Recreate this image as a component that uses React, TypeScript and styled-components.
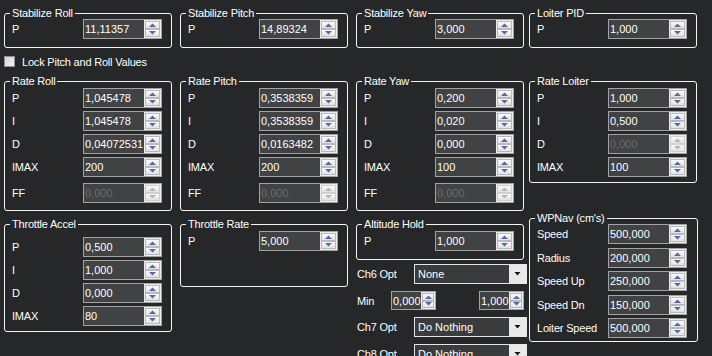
import React from "react";
import styled, { createGlobalStyle } from "styled-components";

const BG = "#262728";
const CTRL = "#414243";

const GlobalStyle = createGlobalStyle`
  * { box-sizing: border-box; }
  html, body { margin: 0; padding: 0; background: ${BG}; }
  body {
    width: 712px;
    height: 356px;
    overflow: hidden;
    font-family: "Liberation Sans", Arial, sans-serif;
    font-size: 11px;
    color: #ffffff;
  }
`;

const Page = styled.div`
  display: flex;
  flex-direction: column;
  padding: 7px 0 0 4px;
`;

const Band = styled.div<{ $mt?: number }>`
  display: grid;
  grid-template-columns: 176px 176px 173px 169px;
  align-items: start;
  margin-top: ${(p) => p.$mt ?? 0}px;
`;

const Group = styled.fieldset<{ $pb?: number; $mt?: number; $w?: number }>`
  margin: ${(p) => p.$mt ?? 0}px 0 0 0;
  padding: 0 0 ${(p) => p.$pb ?? 7}px 0;
  width: ${(p) => p.$w ?? 168}px;
  min-width: 0;
  border: 1px solid #f4f4f4;
  border-radius: 3px;
`;

const Title = styled.legend`
  margin-left: 5px;
  padding: 0 2px;
  height: 12px;
  line-height: 12px;
  font-size: 11px;
  letter-spacing: -0.2px;
  color: #ffffff;
`;

const Rows = styled.div<{ $gap?: number; $pt?: number }>`
  display: flex;
  flex-direction: column;
  gap: ${(p) => p.$gap ?? 3}px;
  padding-top: ${(p) => p.$pt ?? 0}px;
`;

const Row = styled.div<{ $mt?: number }>`
  display: flex;
  align-items: center;
  height: 20px;
  padding-left: 7px;
  margin-top: ${(p) => p.$mt ?? 0}px;
`;

const Label = styled.span<{ $w?: number }>`
  width: ${(p) => p.$w ?? 71}px;
  flex: none;
  letter-spacing: -0.2px;
  white-space: nowrap;
`;

const SpinFrame = styled.div<{ $w: number; $h: number }>`
  display: flex;
  width: ${(p) => p.$w}px;
  height: ${(p) => p.$h}px;
  border: 1px solid #a3a3a3;
  background: ${CTRL};
  flex: none;
`;

const SpinValue = styled.span<{ $disabled?: boolean }>`
  flex: 1;
  min-width: 0;
  overflow: hidden;
  white-space: nowrap;
  padding-left: 1px;
  font-size: 11px;
  display: flex;
  align-items: center;
  color: ${(p) => (p.$disabled ? "#6c6d6e" : "#ffffff")};
`;

const SpinCol = styled.div<{ $w: number }>`
  width: ${(p) => p.$w}px;
  flex: none;
  display: flex;
  flex-direction: column;
  padding: 1px;
  background: #ececec;
`;

const SpinBtn = styled.div<{ $disabled?: boolean }>`
  flex: 1;
  display: flex;
  align-items: center;
  justify-content: center;
  border: 1px solid ${(p) => (p.$disabled ? "#d0d0d0" : "#b9b9b9")};
  background: linear-gradient(#fbfbfb, #e2e2e2);
`;

const Check = styled.label`
  display: flex;
  align-items: center;
  gap: 7px;
  height: 13px;
  margin-top: 7px;
  letter-spacing: -0.2px;
  grid-column: 1 / span 2;
`;

const CheckBox = styled.span`
  width: 11px;
  height: 11px;
  border: 1px solid #8f9091;
  background: linear-gradient(135deg, #d3d3d3, #f4f4f4);
`;

const Stack = styled.div`
  display: flex;
  flex-direction: column;
  margin-top: 6px;
`;

const OptRow = styled.div<{ $mt: number }>`
  display: flex;
  align-items: center;
  padding-left: 1px;
  margin-top: ${(p) => p.$mt}px;
`;

const MinRow = styled.div`
  display: grid;
  grid-template-columns: 34px 45px 43px 45px;
  align-items: center;
  padding-left: 1px;
  margin-top: 7px;
`;

const Combo = styled.div`
  display: flex;
  width: 113px;
  height: 20px;
  border: 1px solid #e6e6e6;
  background: #3a3b3c;
  flex: none;
`;

const ComboText = styled.span`
  flex: 1;
  padding-left: 3px;
  display: flex;
  align-items: center;
  white-space: nowrap;
  overflow: hidden;
`;

const ComboBtn = styled.span`
  width: 17px;
  display: flex;
  align-items: center;
  justify-content: center;
  background: #e9e9e9;
`;

function Arrow({ up, disabled }: { up?: boolean; disabled?: boolean }) {
  const c = disabled ? "#b4b4b4" : "#5469a8";
  return (
    <svg width="7" height="4" viewBox="0 0 7 4">
      {up ? <path d="M0 4 L3.5 0.5 L7 4 Z" fill={c} /> : <path d="M0 0 L3.5 3.5 L7 0 Z" fill={c} />}
    </svg>
  );
}

function NumBox({
  value,
  disabled,
  w = 79,
  h = 20,
  sw = 17,
}: {
  value: string;
  disabled?: boolean;
  w?: number;
  h?: number;
  sw?: number;
}) {
  return (
    <SpinFrame $w={w} $h={h}>
      <SpinValue $disabled={disabled}>{value}</SpinValue>
      <SpinCol $w={sw}>
        <SpinBtn $disabled={disabled}>
          <Arrow up disabled={disabled} />
        </SpinBtn>
        <SpinBtn $disabled={disabled}>
          <Arrow disabled={disabled} />
        </SpinBtn>
      </SpinCol>
    </SpinFrame>
  );
}

function Select({ value }: { value: string }) {
  return (
    <Combo>
      <ComboText>{value}</ComboText>
      <ComboBtn>
        <svg width="7" height="4" viewBox="0 0 7 4">
          <path d="M0.5 0 L3.5 3.5 L6.5 0 Z" fill="#111" />
        </svg>
      </ComboBtn>
    </Combo>
  );
}

type Field = { label: string; value: string; disabled?: boolean; mt?: number };

function PidGroup({
  title,
  fields,
  pb,
  mt,
  pt,
  gap,
  w,
}: {
  title: string;
  fields: Field[];
  pb?: number;
  mt?: number;
  pt?: number;
  gap?: number;
  w?: number;
}) {
  return (
    <Group $pb={pb} $mt={mt} $w={w}>
      <Title>{title}</Title>
      <Rows $pt={pt} $gap={gap}>
        {fields.map((f) => (
          <Row key={f.label} $mt={f.mt}>
            <Label>{f.label}</Label>
            <NumBox value={f.value} disabled={f.disabled} />
          </Row>
        ))}
      </Rows>
    </Group>
  );
}

export default function App() {
  return (
    <>
      <GlobalStyle />
      <Page>
        <Band>
          <PidGroup title="Stabilize Roll" pb={8} fields={[{ label: "P", value: "11,11357" }]} />
          <PidGroup title="Stabilize Pitch" pb={8} fields={[{ label: "P", value: "14,89324" }]} />
          <PidGroup title="Stabilize Yaw" pb={8} fields={[{ label: "P", value: "3,000" }]} />
          <PidGroup title="Loiter PID" pb={8} fields={[{ label: "P", value: "1,000" }]} />
        </Band>
        <Band>
          <Check>
            <CheckBox />
            Lock Pitch and Roll Values
          </Check>
        </Band>
        <Band $mt={7}>
          <PidGroup
            title="Rate Roll"
            pt={1}
            fields={[
              { label: "P", value: "1,045478" },
              { label: "I", value: "1,045478" },
              { label: "D", value: "0,04072531" },
              { label: "IMAX", value: "200" },
              { label: "FF", value: "0,000", disabled: true, mt: 3 },
            ]}
          />
          <PidGroup
            title="Rate Pitch"
            pt={1}
            fields={[
              { label: "P", value: "0,3538359" },
              { label: "I", value: "0,3538359" },
              { label: "D", value: "0,0163482" },
              { label: "IMAX", value: "200" },
              { label: "FF", value: "0,000", disabled: true, mt: 3 },
            ]}
          />
          <PidGroup
            title="Rate Yaw"
            pt={1}
            fields={[
              { label: "P", value: "0,200" },
              { label: "I", value: "0,020" },
              { label: "D", value: "0,000" },
              { label: "IMAX", value: "100" },
              { label: "FF", value: "0,000", disabled: true, mt: 3 },
            ]}
          />
          <PidGroup
            title="Rate Loiter"
            pt={1}
            pb={5}
            fields={[
              { label: "P", value: "1,000" },
              { label: "I", value: "0,500" },
              { label: "D", value: "0,000", disabled: true },
              { label: "IMAX", value: "100" },
            ]}
          />
        </Band>
        <Band $mt={1}>
          <PidGroup
            title="Throttle Accel"
            mt={6}
            pt={7}
            pb={5}
            fields={[
              { label: "P", value: "0,500" },
              { label: "I", value: "1,000" },
              { label: "D", value: "0,000" },
              { label: "IMAX", value: "80" },
            ]}
          />
          <PidGroup title="Throttle Rate" mt={6} pt={1} pb={35} fields={[{ label: "P", value: "5,000" }]} />
          <Stack>
            <PidGroup title="Altitude Hold" pt={1} pb={8} fields={[{ label: "P", value: "1,000" }]} />
            <OptRow $mt={4}>
              <Label $w={57}>Ch6 Opt</Label>
              <Select value="None" />
            </OptRow>
            <MinRow>
              <Label $w={34}>Min</Label>
              <NumBox value="0,000" w={45} h={19} sw={14} />
              <span />
              <NumBox value="1,000" w={45} h={19} sw={14} />
            </MinRow>
            <OptRow $mt={7}>
              <Label $w={57}>Ch7 Opt</Label>
              <Select value="Do Nothing" />
            </OptRow>
            <OptRow $mt={7}>
              <Label $w={57}>Ch8 Opt</Label>
              <Select value="Do Nothing" />
            </OptRow>
          </Stack>
          <PidGroup
            title="WPNav (cm's)"
            gap={3.5}
            pb={3}
            w={169}
            fields={[
              { label: "Speed", value: "500,000" },
              { label: "Radius", value: "200,000" },
              { label: "Speed Up", value: "250,000" },
              { label: "Speed Dn", value: "150,000" },
              { label: "Loiter Speed", value: "500,000" },
            ]}
          />
        </Band>
      </Page>
    </>
  );
}
